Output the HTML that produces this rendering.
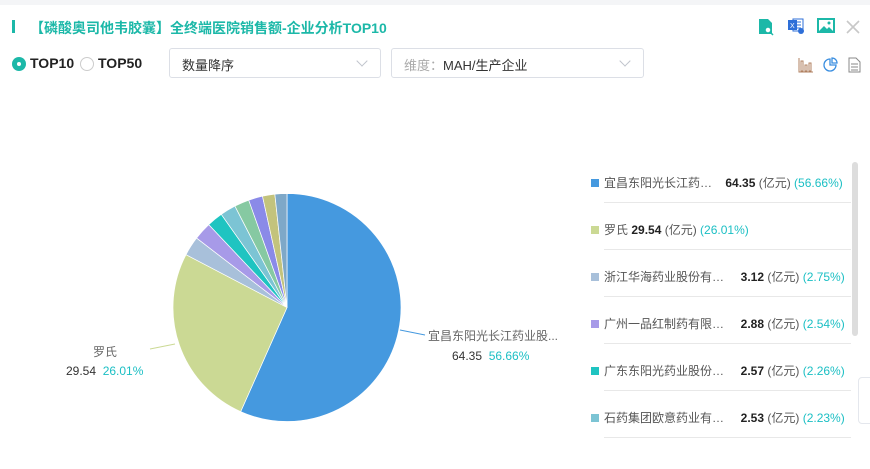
<!DOCTYPE html>
<html><head><meta charset="utf-8"><style>
*{margin:0;padding:0;box-sizing:border-box}
body{width:870px;height:469px;background:#fff;font-family:"Liberation Sans","Noto Sans CJK SC",sans-serif;position:relative;overflow:hidden;color:#333}
.a{position:absolute;white-space:nowrap}
.topbar{left:0;top:0;width:870px;height:5px;background:#f4f5f7}
.title{left:30px;top:18px;font-size:14px;font-weight:bold;color:#1cb8a8}
.bar{left:12px;top:20px;width:3px;height:13px;background:#1cb8a8}
.sel{height:30px;border:1px solid #dcdfe6;border-radius:3px;top:48px;font-size:13px;padding:6px 12px}
.chev{position:absolute;right:14px;top:8px;width:8px;height:8px;border-right:1px solid #c0c4cc;border-bottom:1px solid #c0c4cc;transform:rotate(45deg)}
.lg{font-size:12px;color:#555}
.sq{width:8px;height:8px}
.ln{left:604px;width:247px;height:1px;background:#e8e8e8}
b{color:#222}
.p{color:#1bbfc4}
</style></head><body>
<div class="a topbar"></div>
<div class="a bar"></div>
<div class="a title">【磷酸奥司他韦胶囊】全终端医院销售额-企业分析TOP10</div>
<svg class="a" style="left:757px;top:18px" width="18" height="18"><path d="M2 1h9l4 4v11H2z" fill="#1cb8a8"/><circle cx="11" cy="12" r="3" fill="#fff" stroke="#1cb8a8" stroke-width="1.5"/><path d="M13 14l3 3" stroke="#1cb8a8" stroke-width="1.5"/></svg>
<svg class="a" style="left:787px;top:17px" width="18" height="18"><rect x="6" y="2" width="10" height="12" fill="#fff" stroke="#2e6fd8"/><path d="M9 5h5M9 8h5M9 11h5" stroke="#2e6fd8"/><rect x="1" y="3" width="9" height="10" fill="#2e6fd8"/><text x="3" y="11" font-size="7" fill="#fff" font-family="Liberation Sans">X</text><circle cx="14" cy="14" r="3" fill="#2e6fd8"/></svg>
<svg class="a" style="left:817px;top:18px" width="18" height="16"><rect x="1" y="1" width="16" height="13" fill="#fff" stroke="#1cb8a8" stroke-width="2"/><path d="M2 13l5-5 3 3 2-2 4 4z" fill="#1cb8a8"/><circle cx="12" cy="5" r="1.5" fill="#1cb8a8"/></svg>
<svg class="a" style="left:846px;top:20px" width="14" height="14"><path d="M1 1l12 12M13 1L1 13" stroke="#c8c8c8" stroke-width="1.6"/></svg>
<div class="a" style="left:12px;top:57px;width:14px;height:14px;border-radius:50%;background:#1cb8a8"></div>
<div class="a" style="left:17px;top:62px;width:4px;height:4px;border-radius:50%;background:#fff"></div>
<div class="a" style="left:30px;top:55px;font-size:14px;color:#222;font-weight:bold">TOP10</div>
<div class="a" style="left:80px;top:57px;width:14px;height:14px;border-radius:50%;border:1px solid #ccc"></div>
<div class="a" style="left:98px;top:55px;font-size:14px;color:#222;font-weight:bold">TOP50</div>
<div class="a sel" style="left:169px;width:212px;color:#333">数量降序<span class="chev"></span></div>
<div class="a sel" style="left:391px;width:253px;color:#333"><span style="color:#aaa">维度：</span>MAH/生产企业<span class="chev"></span></div>
<svg class="a" style="left:798px;top:57px" width="16" height="16"><path d="M1 1v14h14" stroke="#b08060" fill="none"/><rect x="3" y="4" width="2" height="10" fill="none" stroke="#b08060"/><rect x="7" y="8" width="2" height="6" fill="none" stroke="#b08060"/><rect x="11" y="6" width="2" height="8" fill="none" stroke="#b08060"/></svg>
<svg class="a" style="left:823px;top:57px" width="15" height="15"><path d="M7 2A6 6 0 1 0 13 8H7z" fill="none" stroke="#3a8ee0" stroke-width="1.3"/><path d="M9 1a5 5 0 0 1 5 5H9z" fill="none" stroke="#3a8ee0" stroke-width="1.3"/></svg>
<svg class="a" style="left:848px;top:57px" width="13" height="16"><path d="M1 1h7l4 4v10H1z" fill="none" stroke="#888"/><path d="M3 7h7M3 10h7M3 13h7" stroke="#888"/></svg>
<svg class="a" id="pie" style="left:0;top:0" width="580" height="469"></svg>
<div class="a" style="left:428px;top:327px;font-size:12px;color:#666">宜昌东阳光长江药业股...</div>
<div class="a" style="left:452px;top:349px;font-size:12px;color:#333">64.35&nbsp;&nbsp;<span class="p">56.66%</span></div>
<div class="a" style="left:93px;top:343px;font-size:12px;color:#666">罗氏</div>
<div class="a" style="left:66px;top:364px;font-size:12px;color:#333">29.54&nbsp;&nbsp;<span class="p">26.01%</span></div>
<div class="a sq" style="left:591px;top:179px;background:#4599df"></div>
<div class="a lg" style="left:604px;top:174px">宜昌东阳光长江药…&nbsp;&nbsp;&nbsp;&nbsp;<b>64.35</b> (亿元) <span class="p">(56.66%)</span></div>
<div class="a ln" style="top:202px"></div>
<div class="a sq" style="left:591px;top:226px;background:#cbd994"></div>
<div class="a lg" style="left:604px;top:221px">罗氏 <b>29.54</b> (亿元) <span class="p">(26.01%)</span></div>
<div class="a ln" style="top:249px"></div>
<div class="a sq" style="left:591px;top:273px;background:#a8c0da"></div>
<div class="a lg" style="left:604px;top:268px">浙江华海药业股份有…&nbsp;&nbsp;&nbsp;&nbsp;&nbsp;<b>3.12</b> (亿元) <span class="p">(2.75%)</span></div>
<div class="a ln" style="top:296px"></div>
<div class="a sq" style="left:591px;top:320px;background:#a79ae8"></div>
<div class="a lg" style="left:604px;top:315px">广州一品红制药有限…&nbsp;&nbsp;&nbsp;&nbsp;&nbsp;<b>2.88</b> (亿元) <span class="p">(2.54%)</span></div>
<div class="a ln" style="top:343px"></div>
<div class="a sq" style="left:591px;top:367px;background:#1fc4c1"></div>
<div class="a lg" style="left:604px;top:362px">广东东阳光药业股份…&nbsp;&nbsp;&nbsp;&nbsp;&nbsp;<b>2.57</b> (亿元) <span class="p">(2.26%)</span></div>
<div class="a ln" style="top:390px"></div>
<div class="a sq" style="left:591px;top:414px;background:#7cc4d4"></div>
<div class="a lg" style="left:604px;top:409px">石药集团欧意药业有…&nbsp;&nbsp;&nbsp;&nbsp;&nbsp;<b>2.53</b> (亿元) <span class="p">(2.23%)</span></div>
<div class="a ln" style="top:437px"></div>
<div class="a" style="left:852px;top:162px;width:6px;height:174px;border-radius:3px;background:#ddd"></div>
<div class="a" style="left:858px;top:377px;width:20px;height:47px;border:1px solid #e4e7ed;border-radius:4px"></div>
<script>
(function(){
var d=[[56.66,"#4599df"],[26.01,"#cbd994"],[2.75,"#a8c0da"],[2.54,"#a79ae8"],[2.26,"#1fc4c1"],[2.23,"#7cc4d4"],[2.1,"#86c9a2"],[2.0,"#8a8ae8"],[1.75,"#c3c37c"],[1.7,"#7ea8c8"]];
var cx=287,cy=307.5,r=114,a=-Math.PI/2,s="",tot=0;d.forEach(function(x){tot+=x[0]});
d.forEach(function(x){var b=a+x[0]/tot*2*Math.PI;
var x1=cx+r*Math.cos(a),y1=cy+r*Math.sin(a),x2=cx+r*Math.cos(b),y2=cy+r*Math.sin(b);
s+='<path d="M'+cx+' '+cy+'L'+x1+' '+y1+'A'+r+' '+r+' 0 '+((b-a)>Math.PI?1:0)+' 1 '+x2+' '+y2+'Z" fill="'+x[1]+'" stroke="#fff" stroke-width="0.7"/>';a=b;});
s+='<path d="M400 330L425 335" stroke="#4599df" fill="none"/><path d="M150 349L175 344" stroke="#cbd994" fill="none"/>';
document.getElementById("pie").innerHTML=s;})();
</script>
</body></html>
